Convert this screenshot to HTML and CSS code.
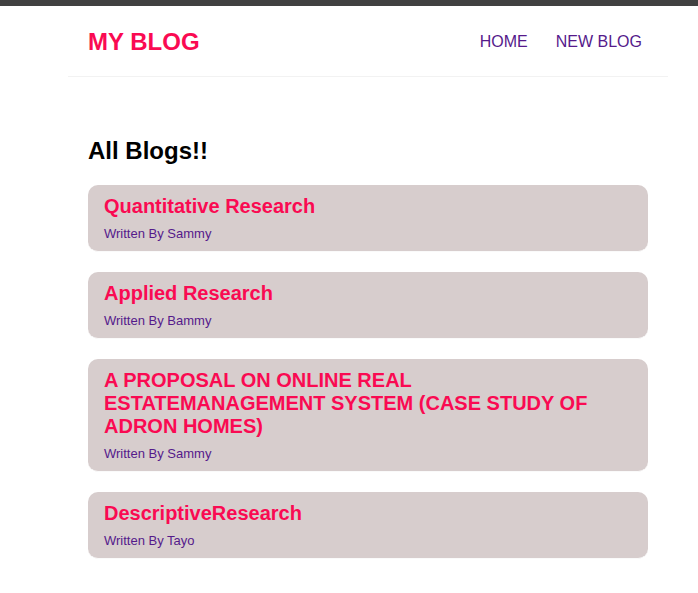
FILE: index.html
```html
<!DOCTYPE html>
<html lang="en">
<head>
<meta charset="utf-8">
<title>My Blog</title>
<link rel="stylesheet" href="styles.css">
</head>
<body>
<div class="topbar"></div>
<div class="app">
  <nav class="navbar">
    <h1 class="brand">MY BLOG</h1>
    <div class="links"><a class="nav-link" href="#">HOME</a><a class="nav-link" href="#">NEW BLOG</a></div>
  </nav>
  <main class="content">
    <h2 class="page-title">All Blogs!!</h2>
    <div class="blog-preview">
      <h2 class="blog-title">Quantitative Research</h2>
      <p class="blog-author">Written By Sammy</p>
    </div>
    <div class="blog-preview">
      <h2 class="blog-title">Applied Research</h2>
      <p class="blog-author">Written By Bammy</p>
    </div>
    <div class="blog-preview">
      <h2 class="blog-title">A PROPOSAL ON ONLINE REAL ESTATEMANAGEMENT SYSTEM (CASE STUDY OF ADRON HOMES)</h2>
      <p class="blog-author">Written By Sammy</p>
    </div>
    <div class="blog-preview">
      <h2 class="blog-title">DescriptiveResearch</h2>
      <p class="blog-author">Written By Tayo</p>
    </div>
  </main>
</div>
</body>
</html>
```
FILE: styles.css
```css
* {
  margin: 0;
  font-family: "Liberation Sans", Arial, sans-serif;
  color: #333;
}
body {
  margin: 0;
  background: #fff;
}
.topbar {
  height: 6px;
  background: #414141;
}
.app {
  padding-top: 2px;
}
.navbar {
  width: 600px;
  box-sizing: border-box;
  margin-left: 68px;
  padding: 20px;
  display: flex;
  align-items: center;
  border-bottom: 1px solid #f2f2f2;
}
.brand {
  font-size: 24px;
  color: #fa0a52;
}
.links {
  margin-left: auto;
}
.nav-link {
  margin-left: 16px;
  padding: 6px;
  text-decoration: none;
  font-size: 16px;
  color: #551a8b;
}
.content {
  width: 600px;
  box-sizing: border-box;
  margin: 40px 0 0 68px;
  padding: 20px 20px 0;
}
.page-title {
  font-size: 24px;
  color: #000;
}
.blog-preview {
  padding: 10px 16px;
  margin: 20px 0;
  background: #d7cdcd;
  border-radius: 10px;
  border-bottom: 1px solid #fafafa;
}
.blog-title {
  font-size: 20px;
  color: #fa0a52;
  margin-bottom: 8px;
}
.blog-author {
  font-size: 13px;
  color: #551a8b;
}
```
